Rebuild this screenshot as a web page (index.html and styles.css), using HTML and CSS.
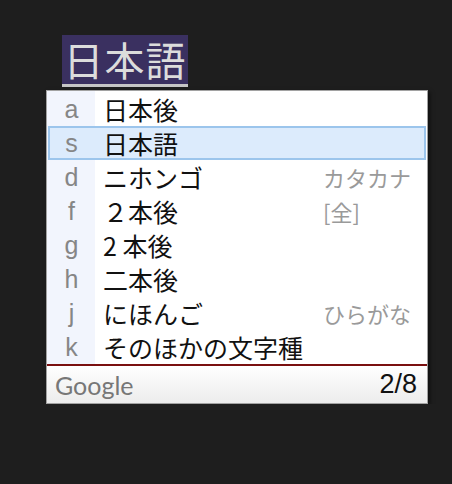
FILE: index.html
```html
<!DOCTYPE html>
<html lang="ja">

<head>
    <meta charset="utf-8">
    <meta name="viewport" content="width=device-width, initial-scale=1.0">
    <title>IME</title>
    <link rel="stylesheet" href="styles.css">
</head>

<body>
    <div class="compose">
        <div class="preedit">日本語</div>
    </div>
    <div class="popup">
        <ul class="list">
            <li class="row"><span class="key">a</span><span class="cand">日本後</span></li>
            <li class="row valgt"><span class="key">s</span><span class="cand">日本語</span></li>
            <li class="row"><span class="key">d</span><span class="cand">ニホンゴ</span><span class="desc">カタカナ</span></li>
            <li class="row"><span class="key">f</span><span class="cand">２本後</span><span class="desc">[全]</span></li>
            <li class="row"><span class="key">g</span><span class="cand">2 本後</span></li>
            <li class="row"><span class="key">h</span><span class="cand">二本後</span></li>
            <li class="row"><span class="key">j</span><span class="cand">にほんご</span><span class="desc">ひらがな</span></li>
            <li class="row"><span class="key">k</span><span class="cand">そのほかの文字種</span></li>
        </ul>
        <div class="footer">
            <span class="brand">Google</span>
            <span class="count">2/8</span>
        </div>
    </div>
</body>

</html>
```

FILE: styles.css
```css
body {
    margin: 0;
    background-color: #1e1e1e;
    font-family: "Noto Sans CJK JP", sans-serif;
}

.compose {
    padding-top: 35px;
    padding-left: 62px;
    height: 88px;
    box-sizing: border-box;
}

.preedit {
    width: 126px;
    height: 52px;
    box-sizing: border-box;
    background-color: #3a3060;
    border-bottom: 3px solid #c6c6c6;
    color: #dcdcdc;
    font-size: 40px;
    line-height: 49px;
    text-align: center;
    letter-spacing: 1px;
}

.popup {
    margin-top: 2px;
    margin-left: 46px;
    width: 380px;
    border: 1px solid #a2a2a2;
    background-color: #fff;
    box-shadow: 2px 2px 4px rgba(0, 0, 0, 0.5);
}

.list {
    list-style: none;
    margin: 0;
    padding: 1px 0 0 0;
    background: linear-gradient(to right, #f2f5fd 48px, #fff 48px);
}

.row {
    display: flex;
    align-items: center;
    height: 34px;
    margin: 0 1px;
    box-sizing: border-box;
    padding-right: 15px;
}

.valgt {
    background-color: #dcebfc;
    border: 2px solid #9cc5ec;
}

.key {
    width: 47px;
    text-align: center;
    font-family: "Liberation Sans", sans-serif;
    font-size: 25px;
    color: #868686;
}

.valgt .key {
    margin-left: -2px;
}

.cand {
    padding-left: 8px;
    font-size: 25px;
    line-height: 34px;
    color: #111;
}

.desc {
    margin-left: auto;
    width: 88px;
    font-size: 22px;
    color: #9a9a9a;
    white-space: nowrap;
}

.footer {
    display: flex;
    justify-content: space-between;
    align-items: center;
    height: 39px;
    box-sizing: border-box;
    border-top: 2px solid #7a1010;
    padding: 0 10px 0 8px;
    background: linear-gradient(#ffffff, #ececec);
}

.brand {
    font-family: Lato, sans-serif;
    font-size: 25px;
    color: #777;
}

.count {
    font-family: "Liberation Sans", sans-serif;
    font-size: 27px;
    color: #111;
}
```
